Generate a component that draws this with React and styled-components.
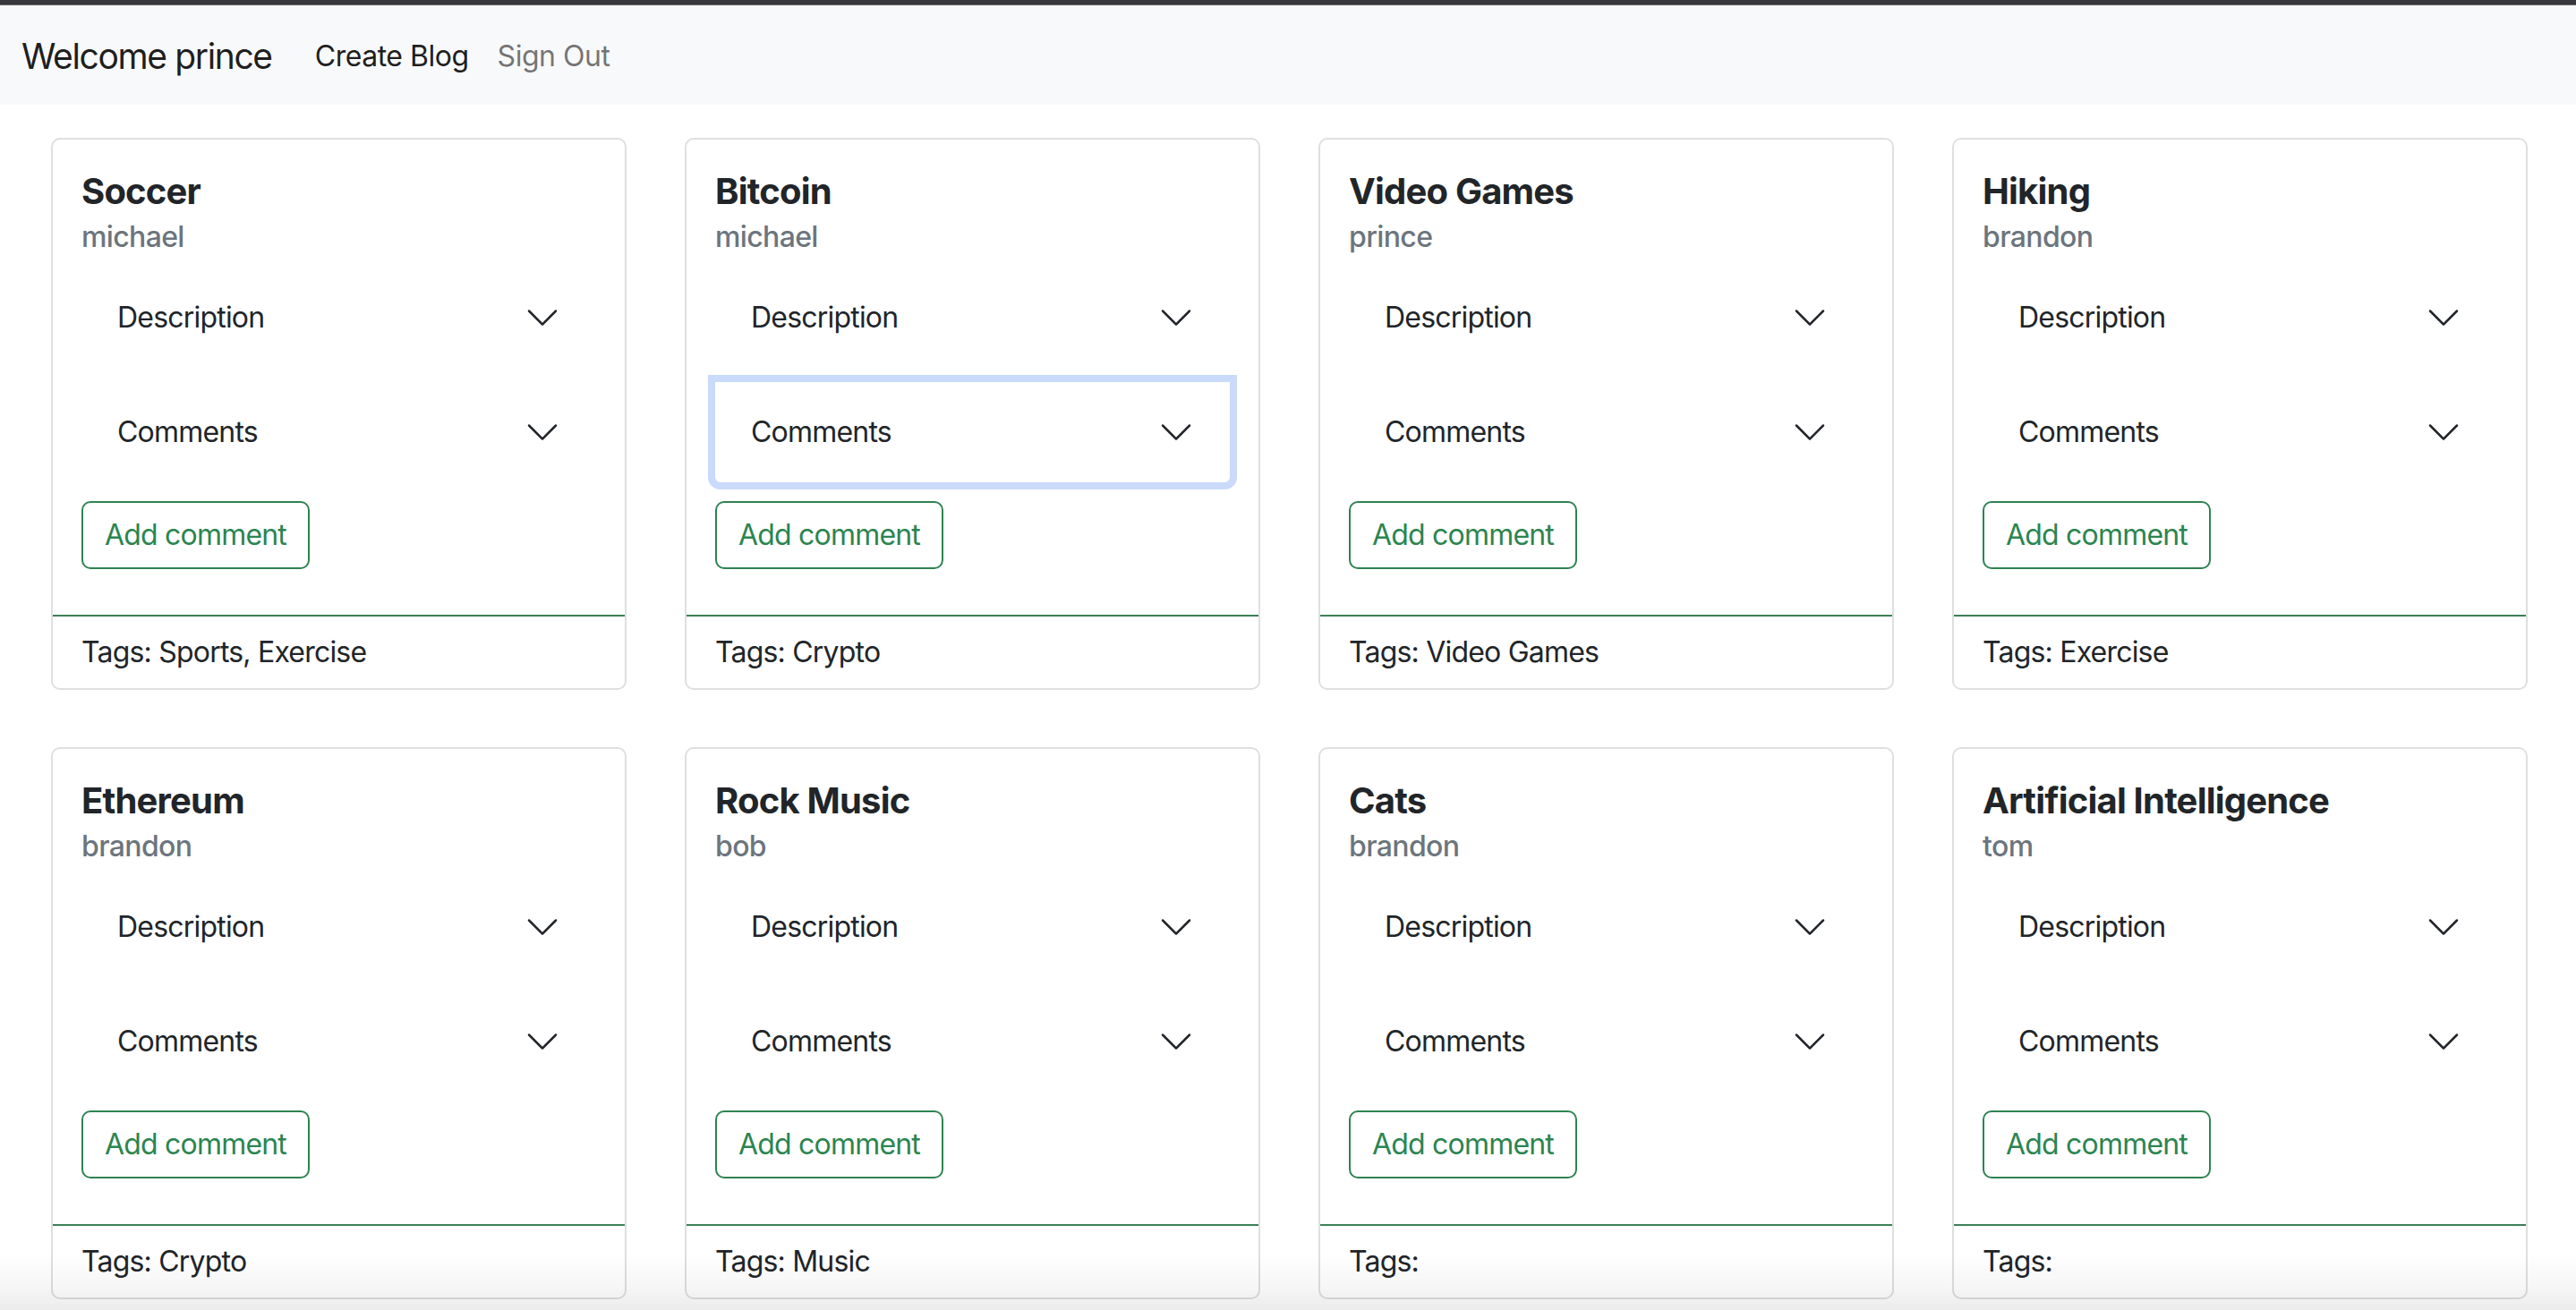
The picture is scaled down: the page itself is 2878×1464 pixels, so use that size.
import React from 'react';
import styled, { createGlobalStyle } from 'styled-components';

const GlobalStyle = createGlobalStyle`
  * { box-sizing: border-box; }
  html, body { margin: 0; padding: 0; }
  body {
    font-family: Inter, "Liberation Sans", Arial, sans-serif;
    color: #212529;
    background: #fff;
    overflow: hidden;
    -webkit-font-smoothing: antialiased;
  }
`;

const TopStrip = styled.div`
  height: 6px;
  background: #38383c;
  border-bottom: 1px solid #6a6a6d;
`;

/* ===== NAVBAR ===== */
const Navbar = styled.nav`
  display: flex;
  align-items: center;
  height: 111px;
  padding: 2px 24px 0;
  background: #f8f9fa;
`;

const Brand = styled.div`
  font-size: 39px;
  line-height: 60px;
  color: rgba(0, 0, 0, 0.9);
  margin-right: 32px;
  letter-spacing: -0.035em;
`;

const NavLink = styled.a`
  font-size: 32px;
  line-height: 48px;
  padding: 0 16px;
  color: ${p => p.$active ? 'rgba(0, 0, 0, 0.9)' : 'rgba(0, 0, 0, 0.55)'};
  text-decoration: none;
  letter-spacing: -0.015em;
`;

/* ===== CARDS ===== */
const Grid = styled.main`
  display: grid;
  grid-template-columns: repeat(4, 643px);
  column-gap: 65px;
  row-gap: 64px;
  padding: 37px 0 0 57px;
`;

const Card = styled.div`
  display: flex;
  flex-direction: column;
  border: 2px solid #dfdfdf;
  border-radius: 10px;
  background: #fff;
`;

const CardBody = styled.div`
  display: flex;
  flex-direction: column;
  padding: 34px 32px 51px;
`;

const Title = styled.h5`
  margin: 0 0 8px;
  font-size: 40px;
  line-height: 48px;
  font-weight: 700;
  letter-spacing: -0.02em;
  color: #212529;
`;

const Subtitle = styled.h6`
  margin: 0 0 15px;
  font-size: 32px;
  line-height: 38px;
  font-weight: 500;
  color: #6c757d;
  letter-spacing: -0.02em;
`;

const Accordion = styled.div`
  display: flex;
  flex-direction: column;
  gap: 16px;
`;

const AccordionButton = styled.button`
  display: flex;
  align-items: center;
  justify-content: space-between;
  width: 100%;
  padding: 32px 40px;
  border: none;
  background: #fff;
  font-family: inherit;
  font-size: 32px;
  line-height: 48px;
  color: #212529;
  text-align: left;
  letter-spacing: -0.025em;
  border-radius: ${p => p.$last ? '0 0 6px 6px' : '0'};
  box-shadow: ${p => p.$focused ? '0 0 0 8px #c9dafb' : 'none'};
  svg { flex-shrink: 0; }
`;

const AddButton = styled.button`
  align-self: flex-start;
  margin-top: 21px;
  padding: 12px 24px;
  border: 2px solid #2f8352;
  border-radius: 10px;
  background: transparent;
  font-family: inherit;
  font-size: 32px;
  line-height: 48px;
  color: #2b8550;
  letter-spacing: -0.025em;
`;

const CardFooter = styled.div`
  border-top: 2px solid #3a8156;
  padding: 16px 32px;
  font-size: 32px;
  line-height: 48px;
  color: #212529;
  letter-spacing: -0.025em;
`;

const BottomShade = styled.div`
  position: fixed;
  left: 0;
  right: 0;
  bottom: 0;
  height: 64px;
  pointer-events: none;
  background: linear-gradient(to bottom, rgba(0, 0, 0, 0) 0%, rgba(0, 0, 0, 0.035) 60%, rgba(0, 0, 0, 0.075) 100%);
`;

function Chevron() {
  return (
    <svg width="40" height="40" viewBox="0 0 16 16" fill="#212529">
      <path d="M1.646 4.646a.5.5 0 0 1 .708 0L8 10.293l5.646-5.647a.5.5 0 0 1 .708.708l-6 6a.5.5 0 0 1-.708 0l-6-6a.5.5 0 0 1 0-.708z" />
    </svg>
  );
}

const blogs = [
  { title: 'Soccer', author: 'michael', tags: 'Sports, Exercise' },
  { title: 'Bitcoin', author: 'michael', tags: 'Crypto', focused: true },
  { title: 'Video Games', author: 'prince', tags: 'Video Games' },
  { title: 'Hiking', author: 'brandon', tags: 'Exercise' },
  { title: 'Ethereum', author: 'brandon', tags: 'Crypto' },
  { title: 'Rock Music', author: 'bob', tags: 'Music' },
  { title: 'Cats', author: 'brandon', tags: '' },
  { title: 'Artificial Intelligence', author: 'tom', tags: '' },
];

function BlogCard({ blog }) {
  return (
    <Card>
      <CardBody>
        <Title>{blog.title}</Title>
        <Subtitle>{blog.author}</Subtitle>
        <Accordion>
          <AccordionButton>
            Description
            <Chevron />
          </AccordionButton>
          <AccordionButton $last $focused={blog.focused}>
            Comments
            <Chevron />
          </AccordionButton>
        </Accordion>
        <AddButton>Add comment</AddButton>
      </CardBody>
      <CardFooter>Tags: {blog.tags}</CardFooter>
    </Card>
  );
}

export default function App() {
  return (
    <>
      <GlobalStyle />
      <TopStrip />
      <Navbar>
        <Brand>Welcome prince</Brand>
        <NavLink $active href="#">Create Blog</NavLink>
        <NavLink href="#">Sign Out</NavLink>
      </Navbar>
      <Grid>
        {blogs.map(b => <BlogCard key={b.title} blog={b} />)}
      </Grid>
      <BottomShade />
    </>
  );
}
